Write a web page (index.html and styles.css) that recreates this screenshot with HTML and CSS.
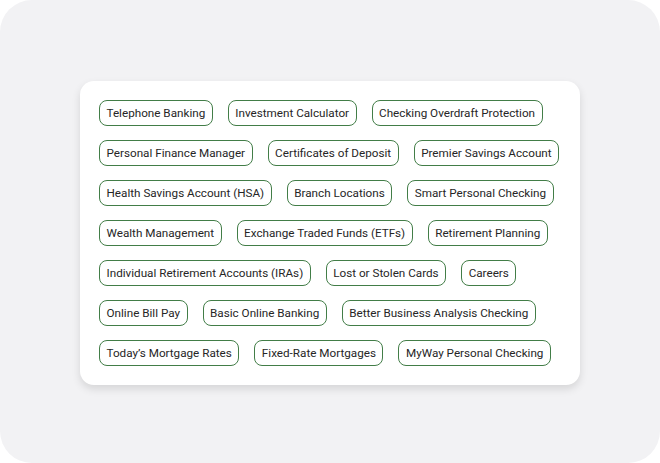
FILE: index.html
```html
<!DOCTYPE html>
<html lang="en">

<head>
    <meta charset="UTF-8">
    <meta name="viewport" content="width=device-width, initial-scale=1.0">
    <title>Quick Links</title>
    <link rel="stylesheet" href="styles.css">
</head>

<body>
    <div class="stage">
        <div class="card">
            <ul class="chips">
                <li><a href="#">Telephone Banking</a></li>
                <li><a href="#">Investment Calculator</a></li>
                <li><a href="#">Checking Overdraft Protection</a></li>
            </ul>
            <ul class="chips">
                <li><a href="#">Personal Finance Manager</a></li>
                <li><a href="#">Certificates of Deposit</a></li>
                <li><a href="#">Premier Savings Account</a></li>
            </ul>
            <ul class="chips">
                <li><a href="#">Health Savings Account (HSA)</a></li>
                <li><a href="#">Branch Locations</a></li>
                <li><a href="#">Smart Personal Checking</a></li>
            </ul>
            <ul class="chips">
                <li><a href="#">Wealth Management</a></li>
                <li><a href="#">Exchange Traded Funds (ETFs)</a></li>
                <li><a href="#">Retirement Planning</a></li>
            </ul>
            <ul class="chips">
                <li><a href="#">Individual Retirement Accounts (IRAs)</a></li>
                <li><a href="#">Lost or Stolen Cards</a></li>
                <li><a href="#">Careers</a></li>
            </ul>
            <ul class="chips">
                <li><a href="#">Online Bill Pay</a></li>
                <li><a href="#">Basic Online Banking</a></li>
                <li><a href="#">Better Business Analysis Checking</a></li>
            </ul>
            <ul class="chips">
                <li><a href="#">Today’s Mortgage Rates</a></li>
                <li><a href="#">Fixed-Rate Mortgages</a></li>
                <li><a href="#">MyWay Personal Checking</a></li>
            </ul>
        </div>
    </div>
</body>

</html>
```

FILE: styles.css
```css
body {
    margin: 0;
    background: #ffffff;
    font-family: Roboto, "Liberation Sans", sans-serif;
}

.stage {
    height: 463px;
    box-sizing: border-box;
    background-color: #f2f2f4;
    border-radius: 32px;
    padding: 81px 80px 0 80px;
}

.card {
    width: 500px;
    height: 304px;
    box-sizing: border-box;
    padding: 19px;
    display: flex;
    flex-direction: column;
    gap: 14px;
    background-color: #fff;
    border-radius: 14px;
    box-shadow: 0 4px 8px rgba(0, 0, 0, 0.12);
}

.chips {
    list-style: none;
    margin: 0;
    padding: 0;
    display: flex;
    gap: 15px;
}

.chips a {
    display: block;
    height: 26px;
    box-sizing: border-box;
    padding: 0 6.5px;
    line-height: 24px;
    font-size: 11.7px;
    color: #262626;
    text-decoration: none;
    border: 1.5px solid #427d47;
    border-radius: 8px;
}
```
